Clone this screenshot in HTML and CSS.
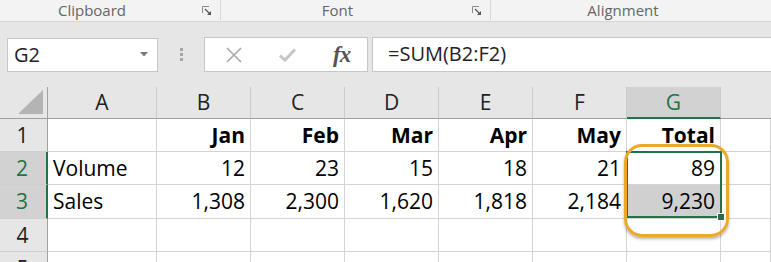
FILE: index.html
```html
<!DOCTYPE html>
<html lang="en">
<head>
    <meta charset="UTF-8">
    <title>Sheet</title>
    <link rel="stylesheet" href="styles.css">
</head>
<body>
    <div class="ribbon">
        <div class="group group-clipboard">
            <span class="group-label">Clipboard</span>
            <svg class="launcher" width="10" height="10" viewBox="0 0 10 10">
                <path d="M0.5 7V0.5H7" fill="none" stroke="#8a8a8a" stroke-width="1"/>
                <path d="M3 3L8 8" stroke="#555" stroke-width="1.2"/>
                <path d="M9 5V9H5Z" fill="#555"/>
            </svg>
        </div>
        <div class="group group-font">
            <span class="group-label">Font</span>
            <svg class="launcher" width="10" height="10" viewBox="0 0 10 10">
                <path d="M0.5 7V0.5H7" fill="none" stroke="#8a8a8a" stroke-width="1"/>
                <path d="M3 3L8 8" stroke="#555" stroke-width="1.2"/>
                <path d="M9 5V9H5Z" fill="#555"/>
            </svg>
        </div>
        <div class="group group-align">
            <span class="group-label">Alignment</span>
        </div>
    </div>

    <div class="formula-bar">
        <div class="name-box">
            <span>G2</span>
            <svg width="8" height="5" viewBox="0 0 8 5"><path d="M0 0H8L4 4.5Z" fill="#7a7a7a"/></svg>
        </div>
        <div class="grip"><i></i><i></i><i></i></div>
        <div class="func-box">
            <svg class="icon-x" width="16" height="16" viewBox="0 0 16 16">
                <path d="M1 1L15 15M15 1L1 15" stroke="#a8a8a8" stroke-width="1.6"/>
            </svg>
            <svg class="icon-check" width="17" height="14" viewBox="0 0 17 14">
                <path d="M1 7.5L6 12L16 1.5" fill="none" stroke="#c4c4c4" stroke-width="3"/>
            </svg>
            <span class="fx">fx</span>
        </div>
        <div class="formula-input">=SUM(B2:F2)</div>
    </div>

    <div class="sheet">
        <div class="corner">
            <svg width="26" height="24" viewBox="0 0 26 24"><path d="M25 0V24H0Z" fill="#b4b4b4"/></svg>
        </div>
        <div class="col-head">A</div>
        <div class="col-head">B</div>
        <div class="col-head">C</div>
        <div class="col-head">D</div>
        <div class="col-head">E</div>
        <div class="col-head">F</div>
        <div class="col-head selected">G</div>
        <div class="col-head last"></div>

        <div class="row-head">1</div>
        <div class="cell"></div>
        <div class="cell num bold">Jan</div>
        <div class="cell num bold">Feb</div>
        <div class="cell num bold">Mar</div>
        <div class="cell num bold">Apr</div>
        <div class="cell num bold">May</div>
        <div class="cell num bold">Total</div>
        <div class="cell"></div>

        <div class="row-head selected">2</div>
        <div class="cell">Volume</div>
        <div class="cell num">12</div>
        <div class="cell num">23</div>
        <div class="cell num">15</div>
        <div class="cell num">18</div>
        <div class="cell num">21</div>
        <div class="cell num">89</div>
        <div class="cell"></div>

        <div class="row-head selected">3</div>
        <div class="cell">Sales</div>
        <div class="cell num">1,308</div>
        <div class="cell num">2,300</div>
        <div class="cell num">1,620</div>
        <div class="cell num">1,818</div>
        <div class="cell num">2,184</div>
        <div class="cell num in-range">9,230</div>
        <div class="cell"></div>

        <div class="row-head">4</div>
        <div class="cell"></div>
        <div class="cell"></div>
        <div class="cell"></div>
        <div class="cell"></div>
        <div class="cell"></div>
        <div class="cell"></div>
        <div class="cell"></div>
        <div class="cell"></div>

        <div class="row-head">5</div>
        <div class="cell"></div>
        <div class="cell"></div>
        <div class="cell"></div>
        <div class="cell"></div>
        <div class="cell"></div>
        <div class="cell"></div>
        <div class="cell"></div>
        <div class="cell"></div>

        <div class="selection"><span class="fill-handle"></span></div>
        <div class="callout"></div>
    </div>
</body>
</html>
```

FILE: styles.css
```css
body {
    margin: 0;
    background: #e6e6e6;
    font-family: "Open Sans", "Liberation Sans", sans-serif;
    color: #000;
    overflow: hidden;
}
.ribbon {
    display: flex;
    height: 21px;
    background: #f3f3f3;
    border-bottom: 1px solid #d6d6d6;
}
.group {
    display: flex;
    align-items: center;
    box-sizing: border-box;
    border-right: 1px solid #d8d8d8;
    height: 20px;
    padding-right: 8px;
}
.group-clipboard { width: 221px; }
.group-font { width: 270px; }
.group-align { width: 264px; border-right: none; padding-right: 0; }
.group-label {
    flex: 1;
    text-align: center;
    font-size: 15px;
    color: #666;
    padding-right: 18px;
    line-height: 20px;
}
.group-align .group-label { padding-right: 0; }
.launcher {
    margin-top: 2px;
}

.formula-bar {
    display: flex;
    align-items: center;
    height: 65px;
    padding-left: 7px;
}
.name-box {
    display: flex;
    align-items: center;
    justify-content: space-between;
    box-sizing: border-box;
    width: 151px;
    height: 34px;
    background: #fff;
    border: 1px solid #c6c6c6;
    padding: 0 9px 0 6px;
    font-size: 20px;
    color: #222;
}
.grip {
    display: flex;
    flex-direction: column;
    gap: 2px;
    width: 46px;
    align-items: center;
}
.grip i {
    display: block;
    width: 3px;
    height: 3px;
    background: #a6a6a6;
}
.func-box {
    display: flex;
    align-items: center;
    box-sizing: border-box;
    width: 164px;
    height: 35px;
    background: #fff;
    border: 1px solid #c6c6c6;
    padding-left: 21px;
}
.icon-check { margin-left: 37px; }
.fx {
    margin-left: 37px;
    font-family: "Liberation Serif", serif;
    font-style: italic;
    font-weight: bold;
    font-size: 23px;
    color: #555;
    letter-spacing: -1px;
}
.formula-input {
    flex: 1;
    box-sizing: border-box;
    height: 35px;
    margin-left: 4px;
    background: #fff;
    border: 1px solid #c6c6c6;
    border-right: none;
    padding-left: 15px;
    font-size: 20px;
    line-height: 32px;
    color: #222;
}

.sheet {
    position: relative;
    display: grid;
    grid-template-columns: 48px 109px repeat(6, 94px) 1fr;
    grid-template-rows: 32px 33px 33px 34px 33px 33px;
    font-size: 21px;
}
.corner {
    display: flex;
    align-items: flex-end;
    justify-content: flex-end;
    box-sizing: border-box;
    padding: 0 3px 4px 0;
    border-right: 1px solid #a0a0a0;
    border-bottom: 1px solid #a0a0a0;
}
.col-head {
    box-sizing: border-box;
    text-align: center;
    line-height: 31px;
    color: #222;
    border-right: 1px solid #cacaca;
    border-bottom: 1px solid #a0a0a0;
}
.col-head.last { border-right: none; }
.col-head.selected {
    background: #d2d2d2;
    color: #217346;
    border-bottom: 2px solid #217346;
}
.row-head {
    box-sizing: border-box;
    text-align: center;
    line-height: 32px;
    padding-right: 2px;
    color: #222;
    border-right: 1px solid #a0a0a0;
    border-bottom: 1px solid #cfcfcf;
}
.row-head.selected {
    background: #d2d2d2;
    color: #217346;
    border-right: 2px solid #217346;
}
.cell {
    box-sizing: border-box;
    background: #fff;
    line-height: 32px;
    padding: 0 5px;
    white-space: nowrap;
    border-right: 1px solid #d4d4d4;
    border-bottom: 1px solid #d4d4d4;
}
.num { text-align: right; }
.bold { font-weight: bold; }
.cell.in-range { background: #d0d0d0; }

.selection {
    position: absolute;
    left: 626px;
    top: 64px;
    width: 96px;
    height: 67px;
    box-sizing: border-box;
    border: 2px solid #217346;
}
.fill-handle {
    position: absolute;
    right: -5px;
    bottom: -5px;
    width: 6px;
    height: 6px;
    background: #217346;
    border: 1px solid #fff;
}
.callout {
    position: absolute;
    left: 624px;
    top: 57px;
    width: 105px;
    height: 93px;
    box-sizing: border-box;
    border: 3px solid #eaa92b;
    border-radius: 18px;
    box-shadow: 0 2px 3px rgba(0, 0, 0, 0.3);
}
```
